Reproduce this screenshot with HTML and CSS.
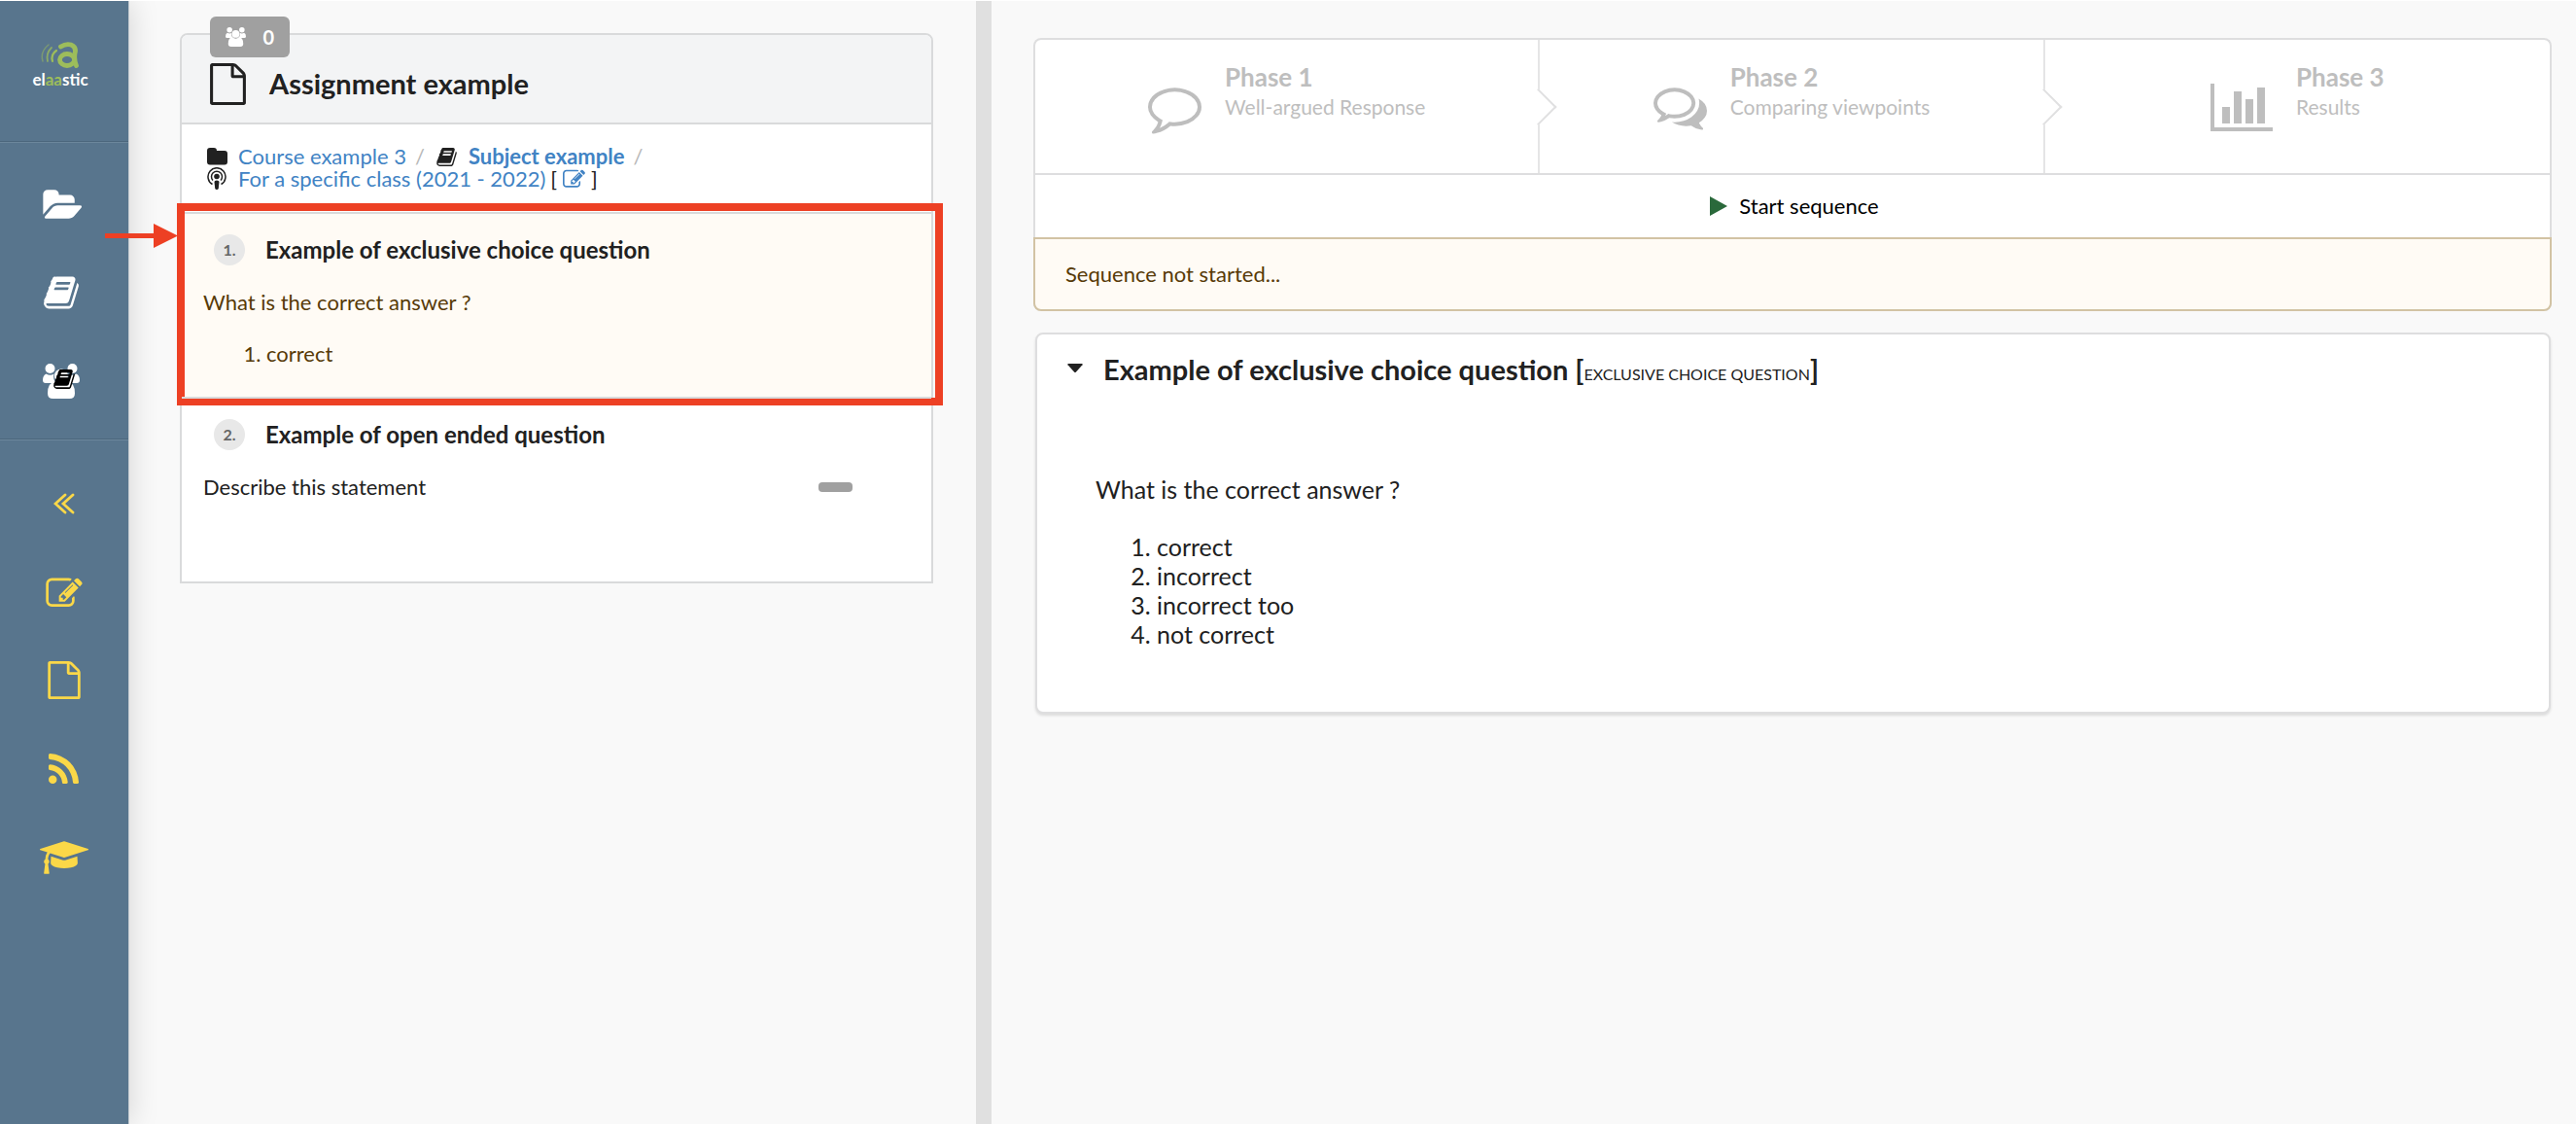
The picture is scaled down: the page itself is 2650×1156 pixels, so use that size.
FILE: index.html
```html
<!DOCTYPE html>
<html lang="en">
<head>
<meta charset="utf-8">
<meta name="viewport" content="width=device-width, initial-scale=1">
<title>Assignment example - elaastic</title>
<link rel="stylesheet" href="styles.css">
</head>
<body>
<svg class="sprite" aria-hidden="true">
  <symbol id="file" viewBox="128 0 1536 1792"><path d="M1596 380q28 28 48 76t20 88v1152q0 40-28 68t-68 28h-1344q-40 0-68-28t-28-68v-1600q0-40 28-68t68-28h896q40 0 88 20t76 48zm-444-244v376h376q-10-29-22-41l-313-313q-12-12-41-22zm384 1528v-1024h-416q-40 0-68-28t-28-68v-416h-768v1536h1280z"/></symbol>
  <symbol id="book" viewBox="60 128 1672 1536"><path d="M1703 478q40 57 18 129l-275 906q-19 64-76.500 107.500t-122.500 43.500h-923q-77 0-148.500-53.500t-99.500-131.500q-24-67-2-127 0-4 3-27t4-37q1-8-3-21.500t-3-19.500q2-11 8-21t16.500-23.500 16.500-23.500q23-38 45-91.500t30-91.500q3-10 .5-30t-.5-28q3-11 17-28t17-23q21-36 42-92t25-90q1-9-2.500-32t.5-28q4-13 22-30.500t22-22.500q19-26 42.500-84.500t27.500-96.500q1-8-3-25.500t-2-26.500q2-8 9-18t18-23 17-21q8-12 16.500-30.500t15-35 16-36 19.500-32 26.500-23.500 36-11.500 47.500 5.500l-1 3q38-9 51-9h761q74 0 114 56t18 130l-274 906q-36 119-71.500 153.500t-128.500 34.500h-869q-27 0-38 15-11 16-1 43 24 70 144 70h923q29 0 56-15.500t35-41.500l300-987q7-22 5-57 38 15 59 43zm-1064 2q-4 13 2 22.500t20 9.500h608q13 0 25.500-9.500t16.500-22.500l21-64q4-13-2-22.500t-20-9.500h-608q-13 0-25.500 9.500t-16.500 22.500zm-83 256q-4 13 2 22.500t20 9.500h608q13 0 25.500-9.500t16.500-22.500l21-64q4-13-2-22.500t-20-9.500h-608q-13 0-25.500 9.500t-16.500 22.500z"/></symbol>
  <symbol id="edit" viewBox="0 100 1792 1436"><path d="M888 1184l116-116-152-152-116 116v56h96v96h56zm440-720q-16-16-33 1l-350 350q-17 17-1 33t33-1l350-350q17-17 1-33zm80 594v190q0 119-84.500 203.500t-203.500 84.500h-832q-119 0-203.500-84.500t-84.500-203.500v-832q0-119 84.500-203.500t203.500-84.500h832q63 0 117 25 15 7 18 23 3 17-9 29l-49 49q-14 14-32 8-23-6-45-6h-832q-66 0-113 47t-47 113v832q0 66 47 113t113 47h832q66 0 113-47t47-113v-126q0-13 9-22l64-64q15-15 35-7t20 29zm-96-738l288 288-672 672h-288v-288zm444 132l-92 92-288-288 92-92q28-28 68-28t68 28l152 152q28 28 28 68t-28 68z"/></symbol>
  <symbol id="users" viewBox="0 0 38 36"><circle cx="7.500" cy="5" r="5"/><circle cx="30.500" cy="5" r="5"/><path d="M3.500 10.500q4 2.500 8 0Q10 16 14 20H3q-3 0-3-3 0-5 3.500-6.500zM34.500 10.500q-4 2.500-8 0Q28 16 24 20h11q3 0 3-3 0-5-3.500-6.500z"/><circle cx="19" cy="12.500" r="7"/><path d="M12.500 18.500q6.500 5 13 0 7.500 1 7.500 12 0 5.500-5.500 5.500h-17Q5 36 5 30.500q0-11 7.500-12z"/></symbol>
</svg>

<div class="app">
  <nav class="sidebar" aria-label="Main">
    <a class="brand" href="#" aria-label="elaastic">
      <svg class="line" width="40" height="28" viewBox="0 0 40 28" aria-hidden="true">
        <path d="M8 3Q-1 10 2 20" stroke-width="1.500" opacity=".5"/><path d="M11 6Q5 12 7 20" stroke-width="1.800" opacity=".75"/><path d="M16 9Q10 13 12 20" stroke-width="2.200"/>
        <path d="M20.500 5Q26 1.500 31 3Q37 5.500 35 12Q34 19 36.500 24.500" stroke-width="4.800"/><ellipse cx="27" cy="18.500" rx="7.500" ry="6" stroke-width="4.800"/>
      </svg>
      <span class="brand-name">el<em>aa</em>stic</span>
    </a>
    <div class="nav-group nav-main">
      <a href="#" aria-label="Courses"><svg width="41" height="30" viewBox="0 128 1943 1408"><path d="M1943 952q0 31-31 66l-336 396q-43 51-120.500 86.500t-143.500 35.500h-1088q-34 0-60.500-13t-26.500-43q0-31 31-66l336-396q43-51 120.500-86.500t143.500-35.500h1088q34 0 60.500 13t26.500 43zm-343-344v160h-832q-94 0-197 47.500t-164 119.500l-337 396-5 6q0-4-.5-12.500t-.5-12.500v-960q0-92 66-158t158-66h320q92 0 158 66t66 158v32h544q92 0 158 66t66 158z"/></svg></a>
      <a href="#" aria-label="Subjects"><svg width="36" height="34"><use href="#book"/></svg></a>
      <a href="#" aria-label="Shared subjects"><svg width="38" height="36" viewBox="0 0 38 36"><use href="#users" width="38" height="36"/><g transform="translate(11 6)"><use href="#book" width="22" height="20" fill="#000"/></g></svg></a>
    </div>
    <div class="nav-group nav-tools">
      <a href="#" aria-label="Collapse"><svg class="line" width="22" height="22" viewBox="0 0 22 22" stroke-width="2.800"><path d="M12 2L2 11l10 9M20 2l-10 9 10 9"/></svg></a>
      <a href="#" aria-label="Edit"><svg width="38" height="30"><use href="#edit"/></svg></a>
      <a href="#" aria-label="Assignment"><svg width="34" height="39"><use href="#file"/></svg></a>
      <a href="#" aria-label="Feed"><svg width="31" height="31" viewBox="192 128 1408 1408"><path d="M576 1344q0 80-56 136t-136 56-136-56-56-136 56-136 136-56 136 56 56 136zm512 123q2 28-17 48-18 21-47 21h-135q-25 0-43-16.500t-20-41.500q-22-229-184.500-391.500t-391.500-184.500q-25-2-41.500-20t-16.500-43v-135q0-29 21-47 17-17 43-17h5q160 13 306 80.500t259 181.500q114 113 181.500 259t80.500 306zm512 2q2 27-18 47-18 20-46 20h-143q-26 0-44.500-17.500t-19.500-42.500q-12-215-101-408.500t-231.500-336-336-231.500-408.500-102q-25-1-42.500-19.500t-17.500-43.500v-143q0-28 20-46 18-18 44-18h3q262 13 501.500 120t425.500 294q187 186 294 425.500t120 501.500z"/></svg></a>
      <a href="#" aria-label="Learners"><svg width="50" height="34" viewBox="0 128 2304 1536"><path d="M1774 836l18 316q4 69-82 128t-235 93.500-323 34.500-323-34.500-235-93.500-82-128l18-316 574 181q22 7 48 7t48-7zm530-324q0 23-22 31l-1120 352q-4 1-10 1t-10-1l-652-206q-43 34-71 111.500t-34 178.500q63 36 63 109 0 69-58 107l58 433q2 14-8 25-9 11-24 11h-192q-15 0-24-11-10-11-8-25l58-433q-58-38-58-107 0-73 65-111 11-207 98-330l-333-104q-22-8-22-31t22-31l1120-352q4-1 10-1t10 1l1120 352q22 8 22 31z"/></svg></a>
    </div>
  </nav>

  <section class="pane pane-left">
    <div class="assignment">
      <div class="attendance"><svg width="21" height="20"><use href="#users"/></svg><span>0</span></div>
      <header class="assignment-head">
        <svg width="37" height="43"><use href="#file"/></svg>
        <h1>Assignment example</h1>
      </header>
      <div class="crumbs">
        <div class="crumb-row">
          <span class="slot"><svg width="21" height="18" viewBox="0 0 21 18"><path d="M3 0h4q3 0 3 3h8q3 0 3 3v8.500q0 3-3 3H3q-3 0-3-3V3q0-3 3-3z"/></svg></span>
          <a href="#">Course example 3</a>
          <span class="slash">/</span>
          <span class="slot"><svg width="21" height="19"><use href="#book"/></svg></span>
          <a href="#"><b>Subject example</b></a>
          <span class="slash">/</span>
        </div>
        <div class="crumb-row">
          <span class="slot"><svg width="20" height="23" viewBox="0 0 20 23"><g fill="none" stroke="currentColor" stroke-width="1.500"><path d="M5.500 17.500A9 9 0 1 1 14.500 17.500"/><path d="M6 13.500A5.500 5.500 0 1 1 14 13.500"/></g><circle cx="10" cy="9.500" r="2.800"/><path d="M7.500 15q0-1.500 2.500-1.500t2.500 1.500l-.7 6.500q-.2 1.500-1.800 1.500t-1.800-1.500z"/></svg></span>
          <a href="#">For a specific class (2021 - 2022)</a>
          <span class="bracket">[</span><a class="crumb-edit" href="#" aria-label="Edit"><svg width="23" height="19"><use href="#edit"/></svg></a><span>]</span>
        </div>
      </div>
      <article class="question is-active">
        <div class="question-head"><span class="num">1.</span><h2>Example of exclusive choice question</h2></div>
        <p>What is the correct answer ?</p>
        <ol><li>correct</li></ol>
        <div class="highlight"></div>
        <svg class="pointer" width="75" height="26" viewBox="0 0 75 26" aria-hidden="true"><path d="M0 10h50V0l25 12.500L50 25V15H0z"/></svg>
      </article>
      <article class="question">
        <div class="question-head"><span class="num">2.</span><h2>Example of open ended question</h2></div>
        <p class="with-state">Describe this statement <span class="state"></span></p>
      </article>
    </div>
  </section>

  <div class="splitter" role="separator"></div>

  <main class="pane pane-right">
    <section class="sequence">
      <div class="steps">
        <div class="step">
          <svg width="55" height="56" viewBox="0 0 1792 1792"><path d="M896 384q-204 0-381.500 69.500t-282 187.500-104.500 255q0 112 71.500 213.500t201.500 175.500l87 50-27 96q-24 91-70 172 152-63 275-171l43-38 57 6q69 8 130 8 204 0 381.500-69.500t282-187.500 104.500-255-104.500-255-282-187.500-381.500-69.500zm896 512q0 174-120 321.500t-326 233-450 85.500q-70 0-145-8-198 175-460 242-49 14-114 22h-5q-15 0-27-10.500t-16-27.500v-1q-3-4-.5-12t2-10 4.500-9.500l6-9 7-8.500 8-9q7-8 31-34.500t34.500-38 31-39.500 32.500-51 27-59 26-76q-157-89-247.500-220t-90.500-281q0-130 71-248.500t191-204.500 286-136.500 348-50.500 348 50.500 286 136.500 191 204.500 71 248.500z"/></svg>
          <div class="step-text"><h3>Phase 1</h3><p>Well-argued Response</p></div>
        </div>
        <div class="step">
          <svg width="55" height="56" viewBox="0 0 1792 1792"><path d="M704 384q-153 0-286 52t-211.500 141-78.500 191q0 82 53 158t149 132l97 56-35 84q34-20 62-39l44-31 53 10q78 14 153 14 153 0 286-52t211.500-141 78.500-191-78.500-191-211.500-141-286-52zm0-128q191 0 353.500 68.500t256.500 186.500 94 257-94 257-256.500 186.500-353.500 68.500q-86 0-176-16-124 88-278 128-36 9-86 16h-3q-11 0-20.500-8t-11.500-21q-1-3-1-6.500t.5-6.500 2-6l2.500-5 3.500-5.500 4-5 4.500-5 4-4.500q5-6 23-25t26-29.500 22.500-29 25-38.500 20.500-44q-124-72-195-177t-71-224q0-139 94-257t256.500-186.500 353.500-68.500zm822 1169q10 24 20.500 44t25 38.500 22.500 29 26 29.500 23 25q1 1 4 4.500t4.500 5 4 5 3.500 5.500l2.500 5 2 6 .5 6.500-1 6.500q-3 14-13 22t-22 7q-50-7-86-16-154-40-278-128-90 16-176 16-271 0-472-132 58 4 88 4 161 0 309-45t264-129q125-92 192-212t67-254q0-77-23-152 129 71 204 178t75 230q0 120-71 224.500t-195 176.500z"/></svg>
          <div class="step-text"><h3>Phase 2</h3><p>Comparing viewpoints</p></div>
        </div>
        <div class="step">
          <svg width="64" height="56" viewBox="0 0 64 56"><path d="M0 4h4v45h60v4H0zM12 28h8v17h-8zM24 12h8v33h-8zM36 20h8v25h-8zM48 8h8v37h-8z"/></svg>
          <div class="step-text"><h3>Phase 3</h3><p>Results</p></div>
        </div>
      </div>
      <button class="start" type="button"><svg width="22" height="20" viewBox="0 0 22 20"><path d="M4 0l18 10L4 20z"/></svg>Start sequence</button>
      <div class="notice">Sequence not started...</div>
    </section>

    <section class="detail">
      <h2><svg class="caret" width="16" height="9" viewBox="0 0 16 9"><path d="M1 0h14q1 0 .5 1.200L9 8.400q-1 1-2 0L.5 1.200Q0 0 1 0z"/></svg><span>Example of exclusive choice question [<small>EXCLUSIVE CHOICE QUESTION</small>]</span></h2>
      <div class="detail-body">
        <p>What is the correct answer ?</p>
        <ol><li>correct</li><li>incorrect</li><li>incorrect too</li><li>not correct</li></ol>
      </div>
    </section>
  </main>
</div>
</body>
</html>
```
FILE: styles.css
```css
* { box-sizing: border-box; }

body {
  margin: 0;
  border-top: 1px solid #fff;
  background: #f9f9f9;
  color: #212121;
  font: 22px/30px Lato, "Liberation Sans", sans-serif;
}

h1, h2, h3, p, ol { margin: 0; }
svg { display: block; flex: none; fill: currentColor; }
svg.line { fill: none; stroke: currentColor; stroke-linecap: round; }
a { color: #4183c4; text-decoration: none; }
.sprite { position: absolute; width: 0; height: 0; }

.app {
  display: grid;
  grid-template-columns: 132px minmax(0, 872fr) 16px minmax(0, 1630fr);
  min-height: calc(100vh - 1px);
}

/* Sidebar */
.sidebar {
  background: #58758d;
  box-shadow: 1px 0 0 #c3cad0, 2px 0 28px rgba(0, 0, 0, .15);
}
.brand {
  display: flex;
  flex-direction: column;
  align-items: center;
  gap: 2px;
  height: 144px;
  padding: 42px 8px 0 0;
  color: #9dbd5b;
}
.brand-name {
  color: #fff;
  font-size: 17px;
  font-weight: 700;
  line-height: 18px;
}
.brand-name em { color: #9dbd5b; font-style: normal; }
.nav-group {
  display: flex;
  flex-direction: column;
  border-top: 1px solid #4c677d;
  box-shadow: inset 0 1px 0 #6c879c;
}
.nav-group a {
  display: flex;
  align-items: center;
  justify-content: center;
  height: 91px;
  color: inherit;
}
.nav-main { height: 306px; padding: 18px 6px 0 0; color: #fff; }
.nav-tools { padding: 20px 1px 0 0; color: #fbd848; }

/* Assignment pane */
.pane-left { padding: 33px 44px 0 53px; }
.assignment {
  position: relative;
  border: 2px solid #d9dadb;
  border-radius: 8px 8px 0 0;
  background: #fff;
}
.attendance {
  position: absolute;
  top: -19px;
  left: 29px;
  display: flex;
  align-items: center;
  justify-content: space-between;
  width: 82px;
  height: 42px;
  padding: 0 16px;
  border-radius: 6px;
  background: #a0a0a0;
  color: #fff;
  font-size: 20px;
  font-weight: 700;
}
.assignment-head {
  display: flex;
  align-items: flex-end;
  gap: 24px;
  height: 92px;
  padding: 0 29px 18px;
  border-bottom: 2px solid #d9dadb;
  border-radius: 6px 6px 0 0;
  background: #f3f4f5;
}
.assignment-head h1 { font-size: 29px; line-height: 44px; }

.crumbs { padding: 22px 22px 23px; line-height: 22px; }
.crumb-row { display: flex; align-items: center; }
.slot {
  display: flex;
  justify-content: center;
  width: 28px;
  margin-right: 8px;
}
.slash { margin: 0 9px; color: #b8b8b8; }
.bracket { margin-left: 5px; }
.crumb-edit { margin: 0 6px; }

.question {
  position: relative;
  display: flex;
  flex-direction: column;
  gap: 23px;
  padding: 21px 22px 82px;
  border-top: 2px solid #d9dadb;
}
.question.is-active { padding-bottom: 29px; background: #fffbf5; color: #573a08; }
.question-head { display: flex; align-items: center; gap: 21px; padding-left: 11px; }
.question-head h2 { color: #212121; font-size: 24px; line-height: 30px; }
.num {
  width: 32px;
  border-radius: 50%;
  background: #e8e8e8;
  color: #666;
  font-size: 16px;
  font-weight: 700;
  line-height: 32px;
  text-align: center;
}
.question ol { padding-left: 65px; }
.with-state { display: flex; align-items: center; justify-content: space-between; padding-right: 59px; }
.state { width: 35px; height: 10px; border-radius: 4px; background: #a0a0a0; }

/* Callout drawn over the active question */
.highlight {
  position: absolute;
  inset: -11px -12px -9px -5px;
  border: 8px solid #ed4024;
}
.pointer { position: absolute; top: 10px; left: -79px; fill: #ed4024; }

.splitter { background: #e0e0e0; }

/* Sequence pane */
.pane-right { padding: 38px 25px 0 43px; }
.sequence {
  border: 2px solid #dededf;
  border-bottom: 0;
  border-radius: 8px;
  background: #fff;
}
.steps {
  display: grid;
  grid-template-columns: repeat(3, 1fr);
  border-bottom: 2px solid #dededf;
}
.step {
  position: relative;
  display: flex;
  align-items: center;
  justify-content: center;
  gap: 24px;
  padding: 23px 0 22px;
  color: #bebebe;
}
.step-text { height: 92px; }
.step h3 { font-size: 26px; line-height: 30px; }
.step p { font-size: 21px; line-height: 32px; }
.step:not(:last-child) { border-right: 2px solid #e5e5e6; }
.step:not(:last-child)::after {
  content: "";
  position: absolute;
  z-index: 1;
  top: 50%;
  right: -14px;
  width: 25px;
  height: 25px;
  border: solid #e0e0e1;
  border-width: 0 2px 2px 0;
  background: #fff;
  transform: translateY(-50%) rotate(-45deg);
}
.start {
  display: flex;
  align-items: center;
  justify-content: center;
  gap: 12px;
  width: 100%;
  height: 64px;
  padding: 0;
  border: 0;
  background: none;
  color: #000;
  font: inherit;
}
.start svg { fill: #2a693b; }
.notice {
  margin: 0 -2px;
  padding: 21px 31px;
  border: 2px solid #d2c3a4;
  border-radius: 0 0 8px 8px;
  background: #fffbf5;
  color: #573a08;
}

.detail {
  margin: 22px 1px 0 2px;
  padding: 19px 31px 65px;
  border: 2px solid #dededf;
  border-radius: 8px;
  background: #fff;
  box-shadow: 0 2px 3px rgba(0, 0, 0, .12);
}
.detail h2 { display: flex; gap: 21px; font-size: 29px; line-height: 34px; }
.detail small { font-size: 16px; font-weight: 400; }
.caret { margin-top: 11px; }
.detail-body { padding: 86px 29px 0; font-size: 25px; line-height: 30px; }
.detail-body ol { margin-top: 29px; padding-left: 63px; }
```
